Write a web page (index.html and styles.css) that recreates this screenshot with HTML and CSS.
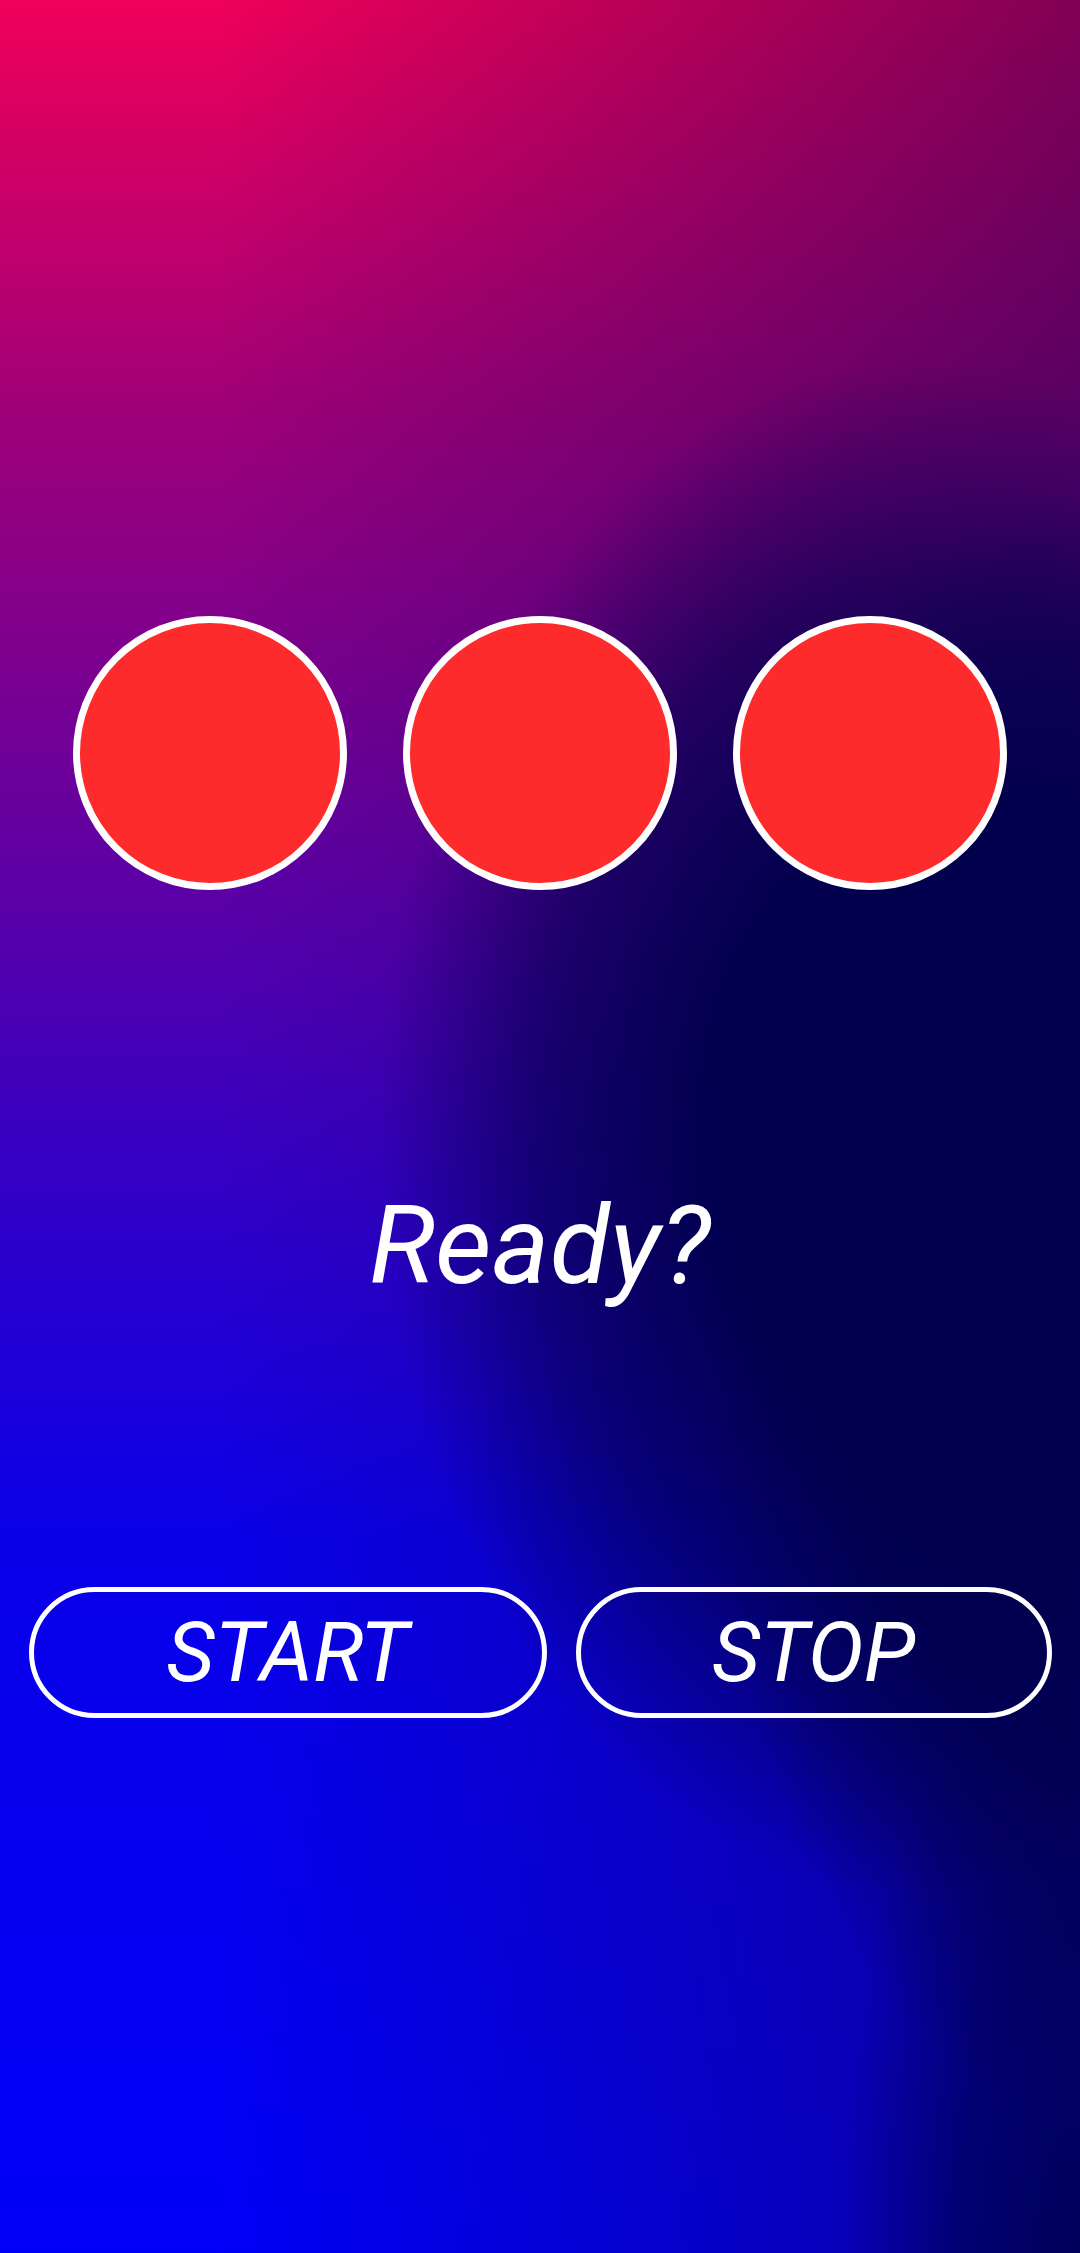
FILE: index.html
```html
<!DOCTYPE html>
<html>
<head>
<meta charset="utf-8">
<link rel="stylesheet" href="styles.css">
</head>
<body>
<main class="screen">
  <div class="lights">
    <div class="light"></div>
    <div class="light"></div>
    <div class="light"></div>
  </div>
  <div class="status">Ready?</div>
  <div class="controls">
    <button class="btn btn-start">START</button>
    <button class="btn btn-stop">STOP</button>
  </div>
</main>
</body>
</html>
```
FILE: styles.css
```css
html, body {
  margin: 0;
  padding: 0;
}
body {
  width: 1080px;
  height: 2253px;
  overflow: hidden;
  font-family: Roboto, "Liberation Sans", sans-serif;
}
.screen {
  width: 1080px;
  height: 2253px;
  display: flex;
  flex-direction: column;
  align-items: center;
  background:
    radial-gradient(ellipse 50% 34% at 85% 50%, rgba(0,0,76,1) 0%, rgba(0,0,76,0.95) 40%, rgba(0,0,76,0.6) 70%, rgba(0,0,76,0) 100%),
    radial-gradient(ellipse 35% 36% at 100% 58%, rgba(0,0,76,1) 0%, rgba(0,0,76,0.8) 60%, rgba(0,0,76,0) 100%),
    radial-gradient(ellipse 22% 28% at 100% 100%, rgba(0,0,90,1) 0%, rgba(0,0,90,0.7) 50%, rgba(0,0,90,0) 100%),
    linear-gradient(to right, rgba(20,0,80,0) 20%, rgba(20,0,80,0.5) 100%),
    linear-gradient(to bottom, #f0005a 0%, #a00078 18%, #7a0090 30%, #3a00c0 50%, #0a00e8 68%, #0000f8 100%);
}
.lights {
  margin-top: 616px;
  display: flex;
  gap: 56px;
}
.light {
  width: 260px;
  height: 260px;
  border: 7px solid #ffffff;
  border-radius: 50%;
  background: #fd2b2b;
}
.status {
  margin-top: 291px;
  font-size: 110px;
  line-height: 130px;
  font-style: italic;
  color: #ffffff;
}
.controls {
  margin-top: 276px;
  display: flex;
  gap: 29px;
  width: 1023px;
}
.btn {
  height: 131px;
  box-sizing: border-box;
  border: 5px solid #ffffff;
  border-radius: 66px;
  background: transparent;
  color: #ffffff;
  font-family: Roboto, "Liberation Sans", sans-serif;
  font-style: italic;
  font-size: 84px;
  display: flex;
  align-items: center;
  justify-content: center;
  padding: 0;
}
.btn-start {
  width: 518px;
}
.btn-stop {
  width: 476px;
}
```
